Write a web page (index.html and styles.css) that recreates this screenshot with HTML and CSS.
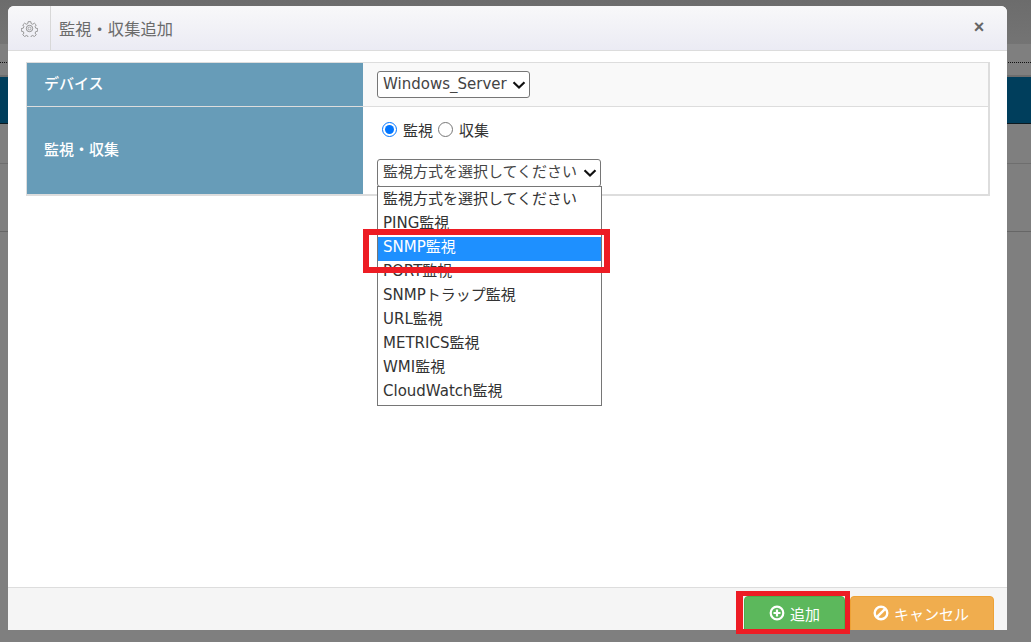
FILE: index.html
```html
<!DOCTYPE html>
<html lang="ja">
<head>
<meta charset="utf-8">
<title>監視・収集追加</title>
<link rel="stylesheet" href="styles.css">
</head>
<body>
<div class="page">
  <div class="bg-top"></div>
  <div class="bg-sub"><div class="dots"></div></div>
  <div class="bg-nav"></div>
  <div class="bg-row1"></div>
  <div class="bg-row2"></div>
  <div class="bg-rest"></div>
</div>

<div class="modal">
  <header class="modal-head">
    <div class="gear-cell">
      <svg class="gear" viewBox="0 0 24 24" width="17" height="17" fill="none" stroke="#8f8f8f" stroke-width="1.4">
        <path d="M10 1.5h4l.6 3 2.3 1 2.6-1.7 2.8 2.8-1.7 2.6 1 2.3 3 .6v4l-3 .6-1 2.3 1.7 2.6-2.8 2.8-2.6-1.7-2.3 1-.6 3h-4l-.6-3-2.3-1-2.6 1.7-2.8-2.8 1.7-2.6-1-2.3-3-.6v-4l3-.6 1-2.3-1.7-2.6 2.8-2.8 2.6 1.7 2.3-1z" transform="translate(12 12) scale(.92) translate(-12 -12)"/>
        <circle cx="12" cy="12" r="4.5"/>
        <circle cx="12" cy="12" r="2" stroke-width="1"/>
      </svg>
    </div>
    <h1 class="modal-title">監視・収集追加</h1>
    <span class="close">×</span>
  </header>

  <div class="modal-body">
    <div class="form-table">
      <div class="form-row row-device">
        <div class="form-label">デバイス</div>
        <div class="form-value">
          <select class="sel sel-device"><option>Windows_Server</option></select>
        </div>
      </div>
      <div class="form-row row-type">
        <div class="form-label">監視・収集</div>
        <div class="form-value value-type">
          <div class="radios">
            <label class="radio-label"><input type="radio" name="kind" checked>監視</label>
            <label class="radio-label"><input type="radio" name="kind">収集</label>
          </div>
          <select class="sel sel-method"><option>監視方式を選択してください</option></select>
        </div>
      </div>
    </div>
  </div>

  <footer class="modal-foot">
    <button class="btn btn-add">
      <svg viewBox="0 0 16 16" width="16" height="16"><circle cx="8" cy="8" r="6.3" fill="none" stroke="#fff" stroke-width="2.2"/><path d="M8 4.5v7M4.5 8h7" stroke="#fff" stroke-width="2.2"/></svg>追加
    </button>
    <button class="btn btn-cancel">
      <svg viewBox="0 0 16 16" width="16" height="16"><circle cx="8" cy="8" r="6.3" fill="none" stroke="#fff" stroke-width="2.4"/><path d="M3.8 12.2l8.4-8.4" stroke="#fff" stroke-width="2.4"/></svg>キャンセル
    </button>
  </footer>
</div>

<ul class="dropdown">
  <li>監視方式を選択してください</li>
  <li>PING監視</li>
  <li class="selected">SNMP監視</li>
  <li>PORT監視</li>
  <li>SNMPトラップ監視</li>
  <li>URL監視</li>
  <li>METRICS監視</li>
  <li>WMI監視</li>
  <li>CloudWatch監視</li>
</ul>

<div class="mark mark-option"></div>
<div class="mark mark-button"></div>
</body>
</html>
```
FILE: styles.css
```css
* { box-sizing: border-box; }
html, body { margin: 0; height: 100%; overflow: hidden; }
body {
  font-family: "DejaVu Sans", "Noto Sans CJK JP", sans-serif;
  font-size: 15px;
  background: #7f7f7f;
  color: #333;
}

/* dimmed page behind the modal */
.page { display: flex; flex-direction: column; height: 642px; }
.bg-top { height: 44px; background: linear-gradient(#6c6c6c, #747474); }
.bg-sub { height: 33px; background: #7f7f7f; border-bottom: 2px solid #6e6e6e; padding-top: 18px; }
.dots { border-top: 1px dotted #111; }
.bg-nav { height: 47px; background: #003e5c; border-bottom: 1px solid #0d1a20; }
.bg-row1 { height: 40px; background: #7f7f7f; border-bottom: 1px solid #6e6e6e; }
.bg-row2 { height: 68px; background: #7f7f7f; border-bottom: 1px solid #666; }
.bg-rest { flex: 1; background: #7f7f7f; }

/* modal */
.modal {
  position: absolute;
  left: 8px;
  top: 6px;
  width: 999px;
  height: 624px;
  background: #fff;
  border-radius: 6px 6px 0 0;
  overflow: hidden;
  display: flex;
  flex-direction: column;
}
.modal-head {
  height: 45px;
  flex: none;
  display: flex;
  align-items: center;
  background: linear-gradient(#f8f8f9, #ebebf4);
  border-bottom: 1px solid #dcdcdc;
}
.gear-cell {
  width: 43px;
  height: 100%;
  display: flex;
  align-items: center;
  justify-content: center;
  border-right: 1px solid #d8d8d8;
}
.modal-title {
  margin: 0 0 0 8px;
  font-size: 16.3px;
  font-weight: 400;
  color: #6b6b6b;
  flex: 1;
  white-space: nowrap;
}
.close {
  width: 14px;
  margin-right: 21px;
  margin-bottom: 3px;
  font-family: "Liberation Sans", sans-serif;
  font-size: 18px;
  font-weight: 700;
  line-height: 1;
  color: #666;
  text-align: center;
}

.modal-body { flex: 1; padding: 11px 17px 0 18px; }
.form-table { border: solid #dddddd; border-width: 1px 2px 2px 1px; }
.form-row { display: flex; }
.form-label {
  width: 336px;
  flex: none;
  display: flex;
  align-items: center;
  padding: 0 0 4px 17px;
  background: #679cb8;
  color: #fff;
  font-weight: 500;
}
.form-value { flex: 1; padding-left: 14px; }
.row-device { height: 44px; border-bottom: 1px solid #ddd; }
.row-device .form-label { border-bottom: 1px solid #ddd; height: 44px; }
.row-device .form-value { background: #f9f9f9; padding-top: 8px; }
.row-type { height: 87px; }
.value-type { background: #fff; padding-top: 12px; }

.radios { display: flex; height: 20px; align-items: center; padding-left: 5px; }
.radio-label { display: flex; align-items: center; margin-right: 5px; color: #333; }
.radio-label input { width: 15px; height: 15px; margin: 0 6px 0 0; accent-color: #0075ff; }

.sel {
  display: block;
  height: 27px;
  padding: 0 18px 2px 1px;
  font: inherit;
  color: #444;
  border: 1px solid #767676;
  border-radius: 3px;
  appearance: none;
  background: #fff url("data:image/svg+xml,%3Csvg xmlns='http://www.w3.org/2000/svg' width='14' height='10' viewBox='0 0 14 10'%3E%3Cpath d='M1.5 2.2L7 7.5l5.5-5.3' fill='none' stroke='%23111' stroke-width='2.2'/%3E%3C/svg%3E") no-repeat right 3px center;
}
.sel-device { width: 153px; padding-left: 5px; }
.sel-method { width: 224px; height: 28px; margin-top: 20px; padding-left: 5px; }

.modal-foot {
  height: 43px;
  flex: none;
  background: #f5f5f5;
  border-top: 1px solid #dddddd;
  display: flex;
  justify-content: flex-end;
  align-items: flex-start;
  padding: 8px 13px 0 0;
  gap: 5px;
}
.btn {
  height: 40px;
  padding: 0 0 6px;
  display: flex;
  align-items: center;
  justify-content: center;
  gap: 5px;
  border: 1px solid;
  border-radius: 4px;
  font: inherit;
  color: #fff;
}
.btn-add { width: 101px; background: #5cb85c; border-color: #4cae4c; }
.btn-cancel { width: 144px; background: #f0ad4e; border-color: #eea236; padding-right: 2px; }

/* open list of the method select */
.dropdown {
  position: absolute;
  left: 377px;
  top: 186px;
  width: 225px;
  height: 220px;
  margin: 0;
  padding: 2px 0 0;
  list-style: none;
  background: #fff;
  border: 1px solid #767676;
  color: #333;
}
.dropdown li { height: 24px; line-height: 20px; padding-left: 5px; white-space: nowrap; }
.dropdown .selected { background: #1e90ff; color: #fff; }

/* red annotation rectangles */
.mark { position: absolute; border: 6px solid #ed1c24; }
.mark-option { left: 363px; top: 229px; width: 247px; height: 44px; }
.mark-button { left: 736px; top: 591px; width: 114px; height: 43px; border-width: 5px 5px 5px 7px; }
```
